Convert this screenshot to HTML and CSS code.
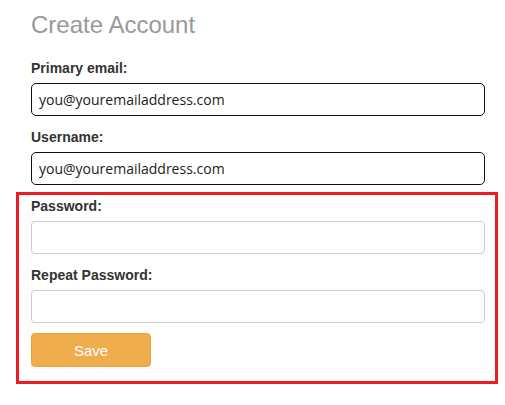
FILE: index.html
```html
<!DOCTYPE html>
<html lang="en">

<head>
    <meta charset="UTF-8">
    <title>Create Account</title>
    <link rel="stylesheet" href="styles.css">
</head>

<body>

    <section class="account-form">
        <div class="intro">
            <h2>Create Account</h2>

            <div class="field">
                <label for="primaryEmail">Primary email:</label>
                <input type="text" id="primaryEmail" class="filled" value="you@youremailaddress.com">
            </div>

            <div class="field">
                <label for="username">Username:</label>
                <input type="text" id="username" class="filled" value="you@youremailaddress.com">
            </div>
        </div>

        <!-- password part, marked in red -->
        <div class="highlight">
            <div class="field">
                <label for="password">Password:</label>
                <input type="password" id="password">
            </div>

            <div class="field">
                <label for="repeatPassword">Repeat Password:</label>
                <input type="password" id="repeatPassword">
            </div>

            <button class="btn" type="button">Save</button>
        </div>
    </section>

</body>

</html>
```

FILE: styles.css
```css
body {
    font-family: 'Liberation Sans', Arial, sans-serif;
    margin: 0;
    padding: 0;
    background-color: #fff;
}

.account-form {
    width: 482px;
    margin-left: 16px;
}

.intro {
    padding: 0 13px 0 15px;
}

.intro .field:last-child {
    margin-bottom: 7px;
}

h2 {
    margin: 11px 0 20px;
    font-size: 24px;
    line-height: 28px;
    font-weight: normal;
    color: #999;
}

.field {
    margin-bottom: 12px;
}

label {
    display: block;
    margin-bottom: 6px;
    font-size: 14px;
    line-height: 18px;
    font-weight: bold;
    color: #333;
}

input {
    display: block;
    width: 100%;
    height: 33px;
    padding: 0 7px;
    border: 1px solid #ccc;
    border-radius: 4px;
    box-sizing: border-box;
    font-family: 'Open Sans', sans-serif;
    font-size: 14px;
    color: #222;
    background-color: #fff;
}

input.filled {
    border-color: #111;
    border-radius: 5px;
}

.highlight {
    border: 3px solid #ed1c24;
    padding: 2px 10px 14px 12px;
}

.highlight .field:last-of-type {
    margin-bottom: 10px;
}

.btn {
    display: block;
    width: 120px;
    height: 34px;
    padding: 0;
    background-color: #f0ad4e;
    border: 1px solid #eea236;
    border-radius: 4px;
    color: #fff;
    font-family: 'Liberation Sans', Arial, sans-serif;
    font-size: 15px;
    cursor: pointer;
}
```
